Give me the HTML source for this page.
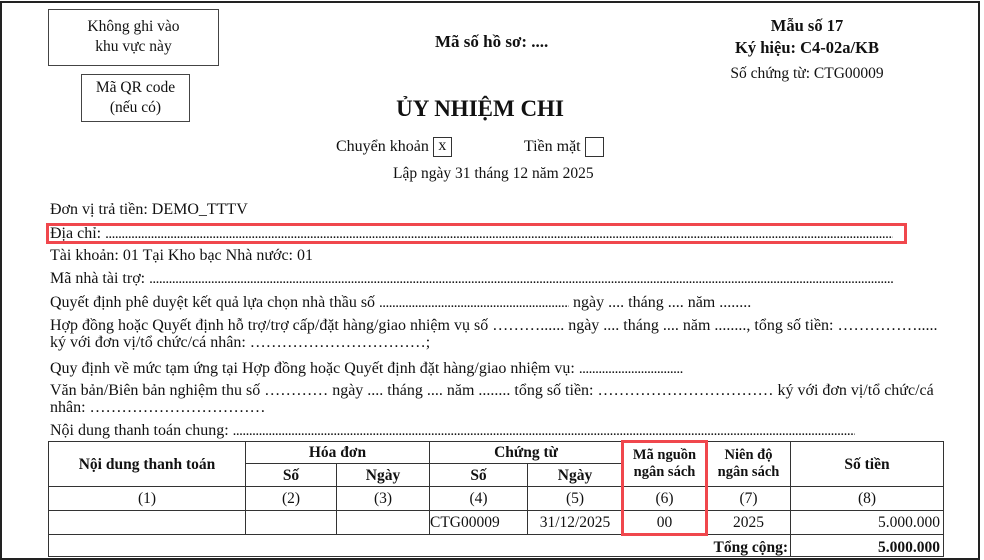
<!DOCTYPE html>
<html><head><meta charset="utf-8">
<style>
*{margin:0;padding:0;box-sizing:border-box}
body{width:984px;height:560px;background:#fff;position:relative;overflow:hidden;font-family:"Liberation Serif",serif;font-size:16px;color:#111}
.frame{position:absolute;left:0;top:1px;width:980px;height:559px;border:2px solid #222}
.a{position:absolute;white-space:nowrap;line-height:18px}
.box{position:absolute;border:1.5px solid #444;text-align:center;line-height:20px;font-size:15.5px}
.b{font-weight:bold}
.d{display:inline-block;overflow:hidden;vertical-align:bottom;white-space:nowrap;font-size:15px;letter-spacing:-0.5px}
.red{position:absolute;border:3px solid #f0474d}
table{position:absolute;left:48px;top:441px;border-collapse:collapse;table-layout:fixed;font-size:15.5px}
td{border:1.5px solid #333;text-align:center;padding:0;line-height:17px;white-space:nowrap}
.hd td{font-weight:bold}
.chk{display:inline-block;width:19px;height:20px;border:1.5px solid #333;vertical-align:middle;text-align:center;line-height:16px}
</style></head><body>
<div class="frame"></div>
<div class="box" style="left:48px;top:9px;width:171px;height:57px;padding-top:7px">Không ghi vào<br>khu vực này</div>
<div class="box" style="left:81px;top:74px;width:109px;height:48px;padding-top:3px">Mã QR code<br>(nếu có)</div>
<div class="a b" style="left:435px;top:33px;font-size:17px">Mã số hồ sơ: ....</div>
<div class="a b" style="left:707px;top:15px;width:200px;text-align:center;font-size:16.5px;line-height:22px">Mẫu số 17<br>Ký hiệu: C4-02a/KB</div>
<div class="a" style="left:707px;top:65px;width:200px;text-align:center;font-size:15.5px">Số chứng từ: CTG00009</div>
<div class="a b" style="left:330px;top:95px;width:300px;text-align:center;font-size:23px;line-height:28px">ỦY NHIỆM CHI</div>
<div class="a" style="left:336px;top:136px;line-height:22px">Chuyển khoản <span class="chk">x</span><span style="display:inline-block;width:72px"></span>Tiền mặt <span class="chk"></span></div>
<div class="a" style="left:393px;top:165px;font-size:15.5px">Lập ngày 31 tháng 12 năm 2025</div>

<div class="a" style="left:50px;top:201px">Đơn vị trả tiền: DEMO_TTTV</div>
<div class="a" style="left:50px;top:225px">Địa chỉ: <span class="d" style="width:788px">..........................................................................................................................................................................................................................................................................................</span></div>
<div class="red" style="left:46px;top:223px;width:861px;height:21px"></div>
<div class="a" style="left:50px;top:247px">Tài khoản: 01 Tại Kho bạc Nhà nước: 01</div>
<div class="a" style="left:50px;top:270px">Mã nhà tài trợ: <span class="d" style="width:745px">........................................................................................................................................................................................................................................................................................................</span></div>
<div class="a" style="left:50px;top:294px">Quyết định phê duyệt kết quả lựa chọn nhà thầu số <span class="d" style="width:190px">.........................................................................................</span> ngày .... tháng .... năm ........</div>
<div class="a" style="left:50px;top:317px">Hợp đồng hoặc Quyết định hỗ trợ/trợ cấp/đặt hàng/giao nhiệm vụ số ………...... ngày .... tháng .... năm ........, tổng số tiền: …………….....</div>
<div class="a" style="left:50px;top:334px">ký với đơn vị/tổ chức/cá nhân: ……………………………;</div>
<div class="a" style="left:50px;top:360px">Quy định về mức tạm ứng tại Hợp đồng hoặc Quyết định đặt hàng/giao nhiệm vụ: <span class="d" style="width:104px">......................................................</span></div>
<div class="a" style="left:50px;top:382px">Văn bản/Biên bản nghiệm thu số ………… ngày .... tháng .... năm ........ tổng số tiền: …………………………… ký với đơn vị/tổ chức/cá</div>
<div class="a" style="left:50px;top:399px">nhân: ……………………………</div>
<div class="a" style="left:50px;top:422px">Nội dung thanh toán chung: <span class="d" style="width:622px">.................................................................................................................................................................................................................................................</span></div>

<table>
<colgroup><col style="width:197px"><col style="width:91px"><col style="width:93px"><col style="width:98px"><col style="width:95px"><col style="width:84px"><col style="width:84px"><col style="width:153px"></colgroup>
<tr class="hd" style="height:22px"><td rowspan="2">Nội dung thanh toán</td><td colspan="2">Hóa đơn</td><td colspan="2">Chứng từ</td><td rowspan="2" style="font-size:14.5px">Mã nguồn<br>ngân sách</td><td rowspan="2" style="font-size:14.5px">Niên độ<br>ngân sách</td><td rowspan="2">Số tiền</td></tr>
<tr class="hd" style="height:23px"><td>Số</td><td>Ngày</td><td>Số</td><td>Ngày</td></tr>
<tr style="height:24px"><td>(1)</td><td>(2)</td><td>(3)</td><td>(4)</td><td>(5)</td><td>(6)</td><td>(7)</td><td>(8)</td></tr>
<tr style="height:24px"><td></td><td></td><td></td><td style="text-align:left">CTG00009</td><td>31/12/2025</td><td>00</td><td>2025</td><td style="text-align:right;padding-right:3px">5.000.000</td></tr>
<tr style="height:22px"><td colspan="7" style="text-align:right;font-weight:bold;padding-right:2px;padding-top:3px">Tổng cộng:</td><td style="text-align:right;font-weight:bold;padding-right:3px;padding-top:3px">5.000.000</td></tr>
</table>
<div class="red" style="left:621px;top:440px;width:87px;height:96px"></div>
</body></html>
